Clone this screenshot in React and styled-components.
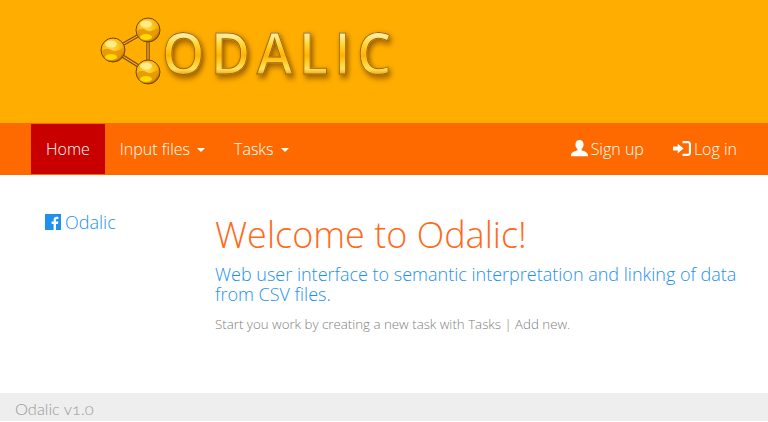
import styled, { createGlobalStyle } from "styled-components";

const GlobalStyle = createGlobalStyle`
  html, body {
    margin: 0;
    padding: 0;
    background: #fff;
    font-family: "Open Sans", "Liberation Sans", sans-serif;
    font-weight: 300;
  }
`;

const Page = styled.div`
  display: flex;
  flex-direction: column;
  height: 422px;
  overflow: hidden;
`;

const Banner = styled.header`
  height: 123px;
  background: #ffae00;
  padding: 16px 0 0 100px;
  box-sizing: border-box;
`;

const Logo = styled.div`
  display: flex;
  align-items: flex-start;
`;

const LogoText = styled.span`
  margin: 1px 0 0 0;
  font-family: "Open Sans", sans-serif;
  font-size: 57px;
  line-height: 70px;
  font-weight: 600;
  letter-spacing: 6.5px;
  transform: scaleX(0.95);
  transform-origin: top left;
  background: linear-gradient(180deg, #fff0b0 24%, #ffd83a 38%, #ffb400 55%, #ffe45a 74%, #e08c00 86%);
  -webkit-background-clip: text;
  background-clip: text;
  color: transparent;
  -webkit-text-stroke: 1px #a86400;
  filter: drop-shadow(2px 3px 3px rgba(110, 60, 0, 0.75));
`;

const Navbar = styled.nav`
  height: 52px;
  box-sizing: border-box;
  background: #ff6a00;
  display: flex;
  align-items: center;
  justify-content: space-between;
  padding: 0 16px 0 31px;
`;

const NavGroup = styled.div`
  display: flex;
  height: 50px;
`;

const NavItem = styled.a`
  display: flex;
  align-items: center;
  padding: 0 15px;
  color: #fff;
  font-size: 16px;
  background: ${(p) => (p.$active ? "#c80000" : "transparent")};
`;

const Caret = styled.span`
  display: inline-block;
  margin-left: 7px;
  margin-right: -1px;
  margin-top: 2px;
  border-top: 4px solid #fff;
  border-left: 4px solid transparent;
  border-right: 4px solid transparent;
`;

const NavIcon = styled.svg`
  width: ${(p) => p.$width}px;
  height: 17px;
  margin-right: 3px;
  margin-left: -1px;
  margin-top: -2px;
  fill: #fff;
`;

const Main = styled.main`
  flex: 1;
  display: flex;
`;

const Sidebar = styled.aside`
  width: 215px;
  box-sizing: border-box;
  padding: 35px 0 0 45px;
`;

const SocialLink = styled.a`
  display: flex;
  align-items: center;
  gap: 4px;
  font-size: 18px;
  line-height: 24px;
  color: #1e90f0;
`;

const FbIcon = styled.svg`
  width: 16px;
  height: 16px;
`;

const Content = styled.section`
  flex: 1;
  padding-top: 36px;
`;

const Title = styled.h1`
  margin: 0;
  font-size: 36px;
  line-height: 48px;
  font-weight: 300;
  color: #ff6a1a;
`;

const Lead = styled.p`
  margin: 5px 0 0;
  font-size: 18px;
  line-height: 20px;
  color: #1e90f0;
`;

const Hint = styled.p`
  margin: 12px 0 0;
  font-size: 13.3px;
  line-height: 17px;
  color: #808080;
`;

const Footer = styled.footer`
  height: 28px;
  margin-bottom: 1px;
  background: #eee;
  padding-left: 15px;
  font-family: "Lato", sans-serif;
  font-size: 16.4px;
  line-height: 31px;
  font-variant-numeric: oldstyle-nums;
  color: #999;
`;

const Ball = ({ cx, cy }) => (
  <g>
    <circle cx={cx} cy={cy} r="12" fill="url(#gold)" stroke="#7a4500" strokeWidth="1" />
    <path
      d={`M${cx - 11} ${cy + 1} q5 -4 9 -1 t12 -2 q-1 13 -11 13 q-9 0 -10 -10z`}
      fill="#e89400"
      opacity="0.85"
    />
    <ellipse cx={cx - 2} cy={cy + 7} rx="6" ry="3" fill="#ffe100" opacity="0.9" />
    <ellipse cx={cx - 2} cy={cy - 6} rx="6" ry="3.5" fill="#ffef9a" opacity="0.85" />
  </g>
);

const MoleculeLogo = () => (
  <svg width="62" height="70" viewBox="0 0 62 70">
    <defs>
      <radialGradient id="gold" cx="45%" cy="35%" r="65%">
        <stop offset="0" stopColor="#ffe14a" />
        <stop offset="0.7" stopColor="#f5b000" />
        <stop offset="1" stopColor="#9a5800" />
      </radialGradient>
    </defs>
    <path d="M13 34 L48 14 L48 56 Z" fill="none" stroke="#8a4e00" strokeWidth="3.5" />
    <path d="M13 34 L48 14 L48 56 Z" fill="none" stroke="#ffc93a" strokeWidth="1" />
    <Ball cx={13} cy={34} />
    <Ball cx={48} cy={14} />
    <Ball cx={48} cy={56} />
  </svg>
);

export default function App() {
  return (
    <Page>
      <GlobalStyle />
      <Banner>
        <Logo>
          <MoleculeLogo />
          <LogoText>ODALIC</LogoText>
        </Logo>
      </Banner>
      <Navbar>
        <NavGroup>
          <NavItem $active>Home</NavItem>
          <NavItem>
            Input files
            <Caret />
          </NavItem>
          <NavItem>
            Tasks
            <Caret />
          </NavItem>
        </NavGroup>
        <NavGroup>
          <NavItem>
            <NavIcon $width={17} viewBox="0.5 0.5 15 15.5" preserveAspectRatio="none">
              <path d="M8 0.5c2.3 0 3.6 1.8 3.6 4 0 1.8-.8 3.4-1.8 4.2v1.2c1.6.8 5.7 1.5 5.7 4.6v.9H.5v-.9c0-3.1 4.1-3.8 5.7-4.6V8.7C5.2 7.900 4.4 6.300 4.4 4.500c0-2.200 1.300-4 3.600-4z" />
            </NavIcon>
            Sign up
          </NavItem>
          <NavItem>
            <NavIcon $width={18} viewBox="0 0 17 16">
              <path d="M0 6.2h4.500V3.400L10 8l-5.500 4.600V9.800H0z" />
              <path d="M9 1h5c1.700 0 3 1.300 3 3v8c0 1.700-1.300 3-3 3H9v-2h5c.6 0 1-.4 1-1V4c0-.6-.4-1-1-1H9z" />
            </NavIcon>
            Log in
          </NavItem>
        </NavGroup>
      </Navbar>
      <Main>
        <Sidebar>
          <SocialLink>
            <FbIcon viewBox="0 0 16 16">
              <rect width="16" height="16" fill="#1e90f0" />
              <path
                d="M11 16V10h2l.3-2.400H11V6.200c0-.7.2-1.200 1.200-1.200h1.200V2.900c-.3 0-1-.1-1.800-.1-1.800 0-3 1.100-3 3.100v1.700H6.600V10h2v6z"
                fill="#fff"
              />
            </FbIcon>
            Odalic
          </SocialLink>
        </Sidebar>
        <Content>
          <Title>Welcome to Odalic!</Title>
          <Lead>
            Web user interface to semantic interpretation and linking of data
            <br />
            from CSV files.
          </Lead>
          <Hint>Start you work by creating a new task with Tasks | Add new.</Hint>
        </Content>
      </Main>
      <Footer>Odalic v1.0</Footer>
    </Page>
  );
}
